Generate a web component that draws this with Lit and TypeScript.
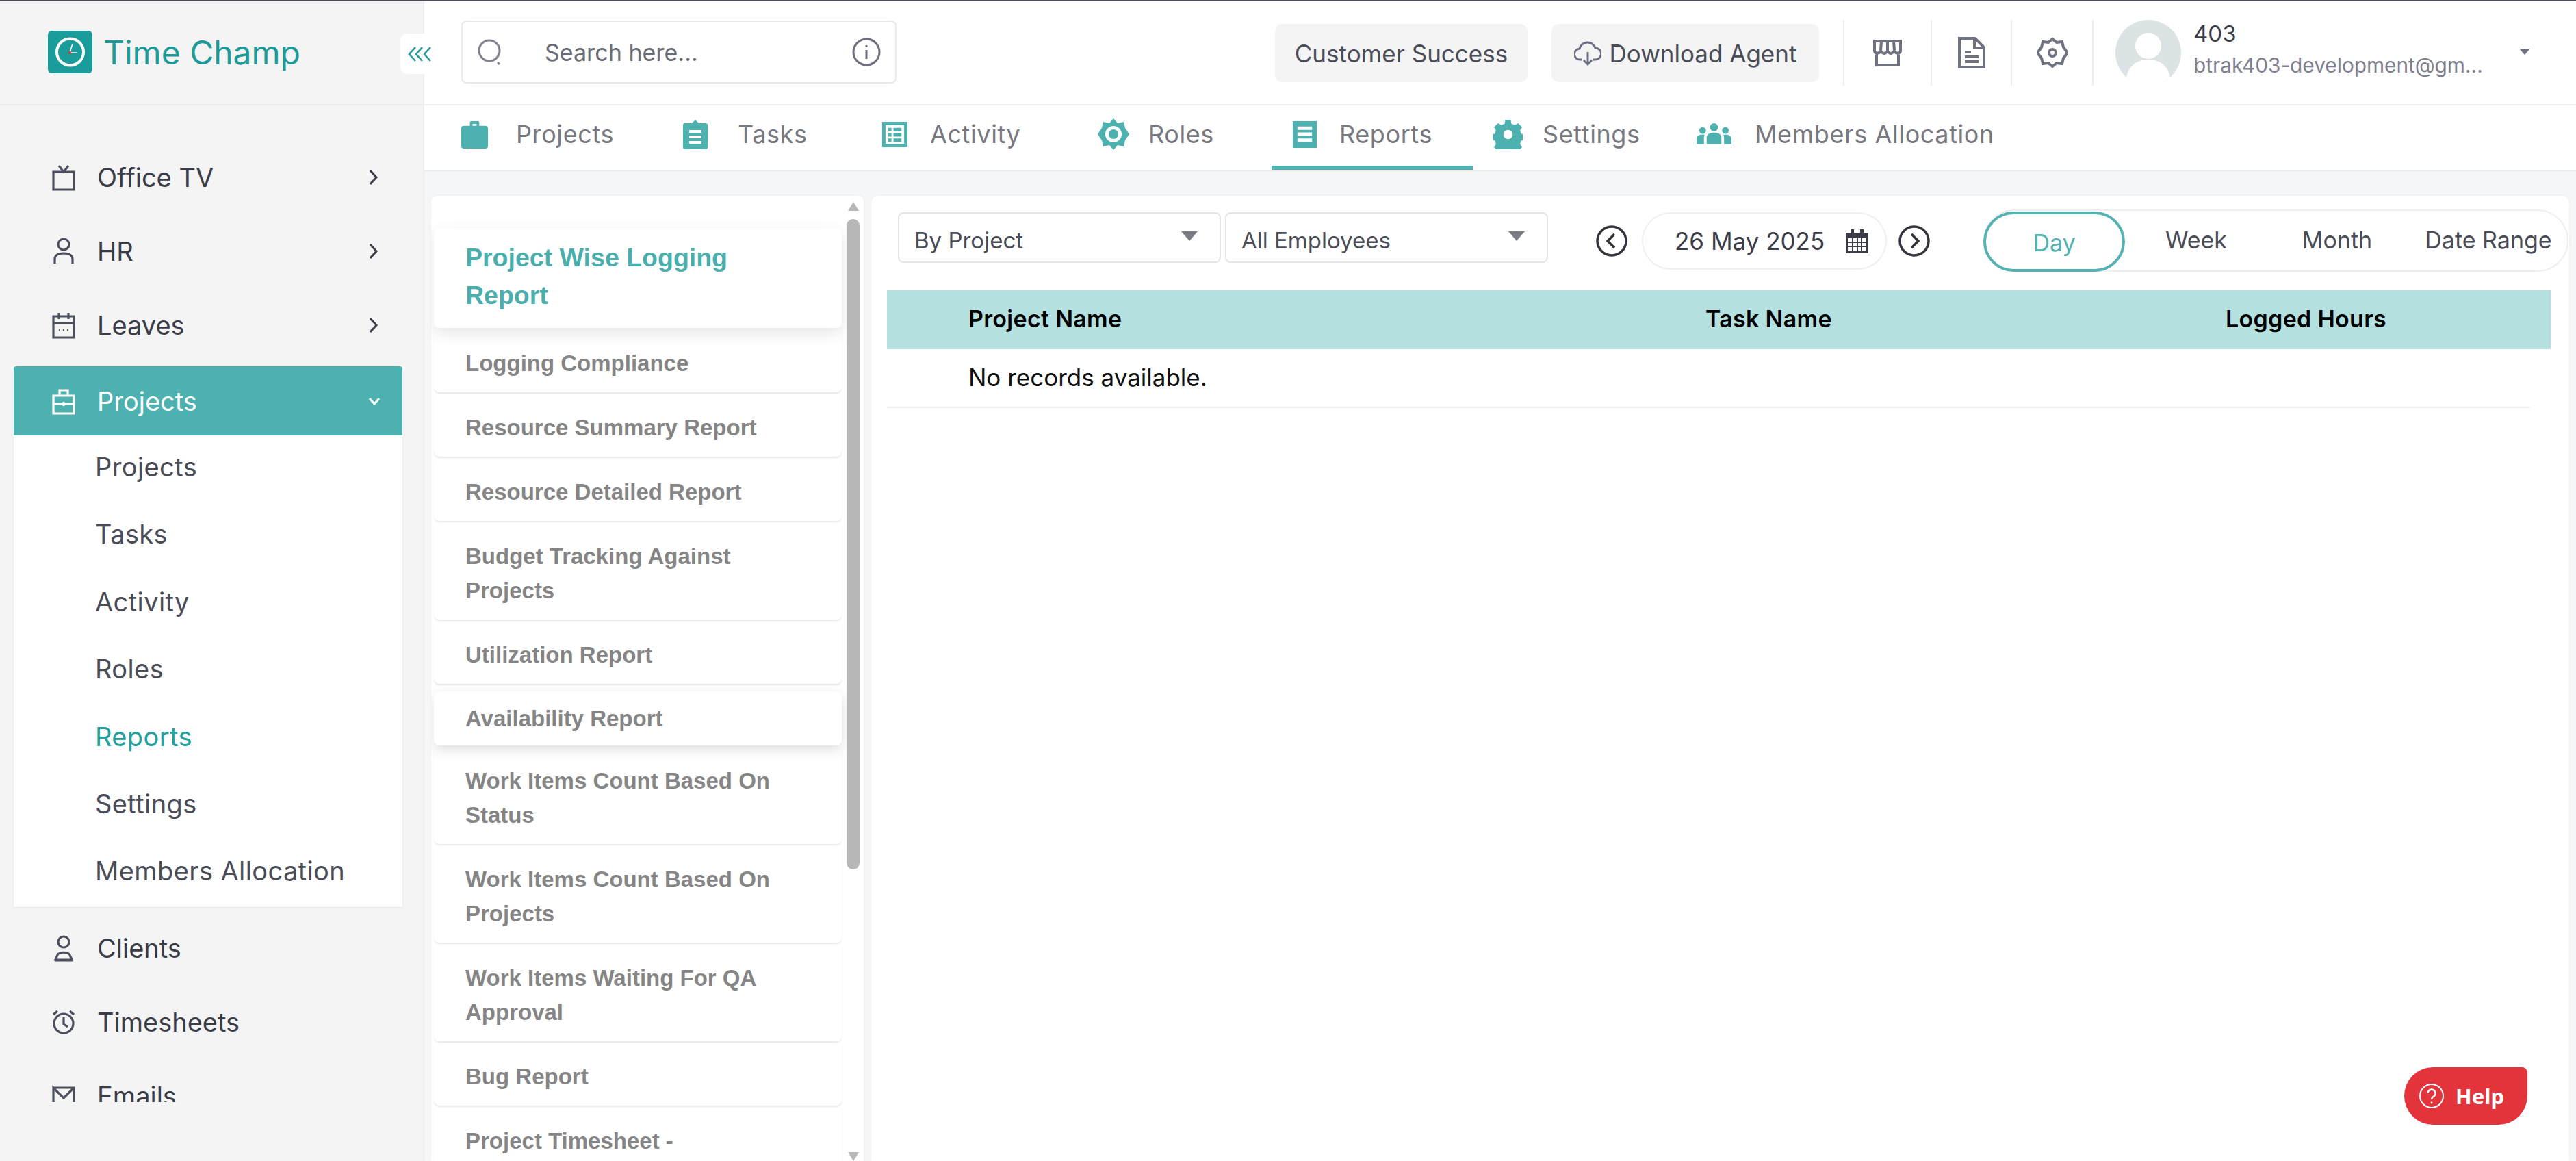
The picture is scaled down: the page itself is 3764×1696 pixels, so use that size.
import { LitElement, html, css } from 'lit';
import { customElement } from 'lit/decorators.js';

// sidebar line icons, all drawn on a 34x40 box
const sideIcons: Record<string, unknown> = {
  tv: html`<svg class="side-ico" viewBox="0 0 34 40"><path d="M2 12h30v26H2zM10 3l7 9 7-9" /></svg>`,
  hr: html`<svg class="side-ico" viewBox="0 0 34 40"><circle cx="17" cy="10" r="8" /><path d="M4 38v-6c0-6 5-9 13-9s13 3 13 9v6" /></svg>`,
  cal: html`<svg class="side-ico" viewBox="0 0 34 40"><path d="M2 7h30v31H2zM2 17h30M10 2v9M24 2v9M10 27h2M16 27h2M22 27h2" /></svg>`,
  bag: html`<svg class="side-ico" viewBox="0 0 34 40"><path d="M2 12h30v26H2zM11 12V4h12v8M2 24h30M17 21v6" /></svg>`,
  client: html`<svg class="side-ico" viewBox="0 0 34 40"><circle cx="17" cy="11" r="8" /><path d="M8 30c2-5 16-5 18 0l3 7H5zM4 38h26" /></svg>`,
  alarm: html`<svg class="side-ico" viewBox="0 0 34 40"><circle cx="17" cy="22" r="14" /><path d="M17 13v10l6 4M2 9l6-5M32 9l-6-5" /></svg>`,
  mail: html`<svg class="side-ico" viewBox="0 0 34 40"><path d="M2 8h30v24M2 32V8l15 15L32 8" /></svg>`,
};

const navTop = [
  { label: 'Office TV', icon: 'tv' },
  { label: 'HR', icon: 'hr' },
  { label: 'Leaves', icon: 'cal' },
];
const navSub = ['Projects', 'Tasks', 'Activity', 'Roles', 'Reports', 'Settings', 'Members Allocation'];
const navBottom = [
  { label: 'Clients', icon: 'client' },
  { label: 'Timesheets', icon: 'alarm' },
  { label: 'Emails', icon: 'mail' },
];

const tabIcons: Record<string, unknown> = {
  case: html`<svg viewBox="0 0 42 42"><path d="M14 8V3a2 2 0 0 1 2-2h10a2 2 0 0 1 2 2v5h9a4 4 0 0 1 4 4v26a4 4 0 0 1-4 4H5a4 4 0 0 1-4-4V12a4 4 0 0 1 4-4zm4 0h6V5h-6z" fill-rule="evenodd" /></svg>`,
  clip: html`<svg viewBox="0 0 38 44"><path d="M4 6h10l5-5 5 5h10a3 3 0 0 1 3 3v32a3 3 0 0 1-3 3H4a3 3 0 0 1-3-3V9a3 3 0 0 1 3-3zM10 16v4h18v-4zM10 24v4h18v-4zM10 32v4h18v-4z" fill-rule="evenodd" /></svg>`,
  table: html`<svg viewBox="0 0 38 38"><path d="M0 0h38v38H0zM5 5v28h28V5zM9 9h5v5H9zM17 9h12v5H17zM9 17h5v5H9zM17 17h12v5H17zM9 25h5v5H9zM17 25h12v5H17z" fill-rule="evenodd" /></svg>`,
  role: html`<svg viewBox="0 0 46 46"><path d="M23 0l6 7 9-2 2 9 6 9-6 9-2 9-9-2-6 7-6-7-9 2-2-9-6-9 6-9 2-9 9 2zM23 11a12 12 0 1 0 0 24 12 12 0 0 0 0-24zM23 16a7 7 0 1 1 0 14 7 7 0 0 1 0-14z" fill-rule="evenodd" /></svg>`,
  rep: html`<svg viewBox="0 0 38 42"><path d="M1 1h36v40H1zM8 9v5h22V9zM8 18v5h22v-5zM8 27v5h22v-5z" fill-rule="evenodd" /></svg>`,
  gear: html`<svg viewBox="0 0 44 44"><path d="M18 0h8l1 6 5 2 5-3 6 6-3 5 2 5 6 1v8l-6 1-2 5 3 5-6 6-5-3-5 2-1 6h-8l-1-6-5-2-5 3-6-6 3-5-2-5-6-1v-8l6-1 2-5-3-5 6-6 5 3 5-2zM22 15a7 7 0 1 0 0 14 7 7 0 0 0 0-14z" fill-rule="evenodd" /></svg>`,
  team: html`<svg viewBox="0 0 52 34"><circle cx="26" cy="7" r="6" /><circle cx="9" cy="12" r="5" /><circle cx="43" cy="12" r="5" /><path d="M15 32V23c0-6 5-8 11-8s11 2 11 8v9zM0 32v-8c0-4 4-6 8-6h4c-1 2-1 4-1 6v8zM52 32v-8c0-4-4-6-8-6h-4c1 2 1 4 1 6v8z" /></svg>`,
};

const tabs = [
  { label: 'Projects', icon: 'case', w: 324, iw: 41, tx: 81 },
  { label: 'Tasks', icon: 'clip', w: 292, iw: 38, tx: 81 },
  { label: 'Activity', icon: 'table', w: 315, iw: 37, tx: 70 },
  { label: 'Roles', icon: 'role', w: 284, iw: 46, tx: 74 },
  { label: 'Reports', icon: 'rep', w: 294, iw: 37, tx: 69, active: true },
  { label: 'Settings', icon: 'gear', w: 297, iw: 43, tx: 72 },
  { label: 'Members Allocation', icon: 'team', w: 480, iw: 51, tx: 85 },
];

const reports = [
  { t: 'Logging Compliance' },
  { t: 'Resource Summary Report' },
  { t: 'Resource Detailed Report' },
  { t: 'Budget Tracking Against Projects' },
  { t: 'Utilization Report' },
  { t: 'Availability Report', hover: true },
  { t: 'Work Items Count Based On Status' },
  { t: 'Work Items Count Based On Projects' },
  { t: 'Work Items Waiting For QA Approval' },
  { t: 'Bug Report' },
  { t: 'Project Timesheet -' },
];

@customElement('app-root')
export class AppRoot extends LitElement {
  static styles = css`
    :host {
      display: block;
      height: 1696px;
      overflow: hidden;
      font-family: Inter, 'Noto Sans', sans-serif;
      color: #3b3f4a;
    }
    .shell {
      display: flex;
      height: 1694px;
      border-top: 2px solid #4a4c55;
      position: relative;
      background: #fff;
    }

    /* sidebar */
    .sidebar {
      width: 618px;
      flex: none;
      background: #f4f4f4;
      border-right: 2px solid #eeeeee;
    }
    .brand {
      height: 150px;
      border-bottom: 2px solid #ececec;
      display: flex;
      align-items: center;
      padding-left: 70px;
      gap: 16px;
    }
    .brand svg {
      width: 65px;
      height: 62px;
      margin-top: -2px;
    }
    .brand span {
      font-size: 48px;
      color: #1b9a98;
      margin-top: -1px;
    }
    .collapse {
      position: absolute;
      left: 585px;
      top: 47px;
      width: 58px;
      height: 59px;
      background: #fff;
      border-radius: 10px;
      display: flex;
      align-items: center;
      justify-content: center;
    }
    .collapse svg {
      width: 36px;
      height: 22px;
      fill: none;
      stroke: #1b9a98;
      stroke-width: 2.500;
    }
    nav {
      height: 1405px;
      padding-top: 51px;
      overflow: hidden;
    }
    .nav-item {
      height: 108px;
      display: flex;
      align-items: center;
      padding-left: 76px;
      font-size: 38px;
      color: #3a3d48;
      position: relative;
    }
    .side-ico {
      width: 34px;
      height: 40px;
      margin-right: 32px;
      fill: none;
      stroke: #4b4e5c;
      stroke-width: 3.2;
      flex: none;
    }
    .chev {
      position: absolute;
      left: 536px;
      width: 18px;
      height: 30px;
      fill: none;
      stroke: #3a3d48;
      stroke-width: 3;
    }
    .nav-item.open {
      height: 101px;
      margin: 6px 0 0 20px;
      width: 568px;
      padding-left: 56px;
      box-sizing: border-box;
      background: #4db1af;
      border-radius: 4px 4px 0 0;
      color: #fff;
    }
    .nav-item.open .side-ico {
      stroke: #fff;
    }
    .nav-item.open .chev {
      left: 516px;
      stroke: #fff;
      width: 22px;
      height: 14px;
    }
    .sub {
      width: 568px;
      margin-left: 20px;
      margin-bottom: 6px;
      background: #fff;
      height: 689px;
      padding-left: 119px;
      box-sizing: border-box;
      box-shadow: 0 1px 2px rgba(0, 0, 0, 0.08);
    }
    .sub div {
      height: 98.4px;
      line-height: 92px;
      font-size: 38px;
      letter-spacing: 0.4px;
      color: #4a4d57;
    }
    .sub div.on {
      color: #22a19e;
    }

    /* top header */
    .main {
      flex: 1;
      min-width: 0;
      display: flex;
      flex-direction: column;
    }
    .header {
      height: 150px;
      flex: none;
      border-bottom: 2px solid #eef0f0;
      display: flex;
      padding-left: 54px;
    }
    .search {
      width: 636px;
      height: 92px;
      margin-top: 28px;
      box-sizing: border-box;
      border: 2px solid #e9e9ec;
      border-radius: 8px;
      display: flex;
      align-items: center;
      padding: 0 20px 0 22px;
      font-size: 34px;
      color: #6a6d76;
    }
    .search .lens {
      width: 38px;
      height: 44px;
      fill: none;
      stroke: #80838e;
      stroke-width: 3;
      margin-right: 60px;
    }
    .search span {
      flex: 1;
    }
    .search .info {
      width: 44px;
      height: 44px;
      fill: none;
      stroke: #6d7080;
      stroke-width: 3;
    }
    .actions {
      margin-left: 553px;
      display: flex;
      height: 96px;
      margin-top: 27px;
    }
    .btn {
      height: 85px;
      margin-top: 6px;
      background: #f4f4f4;
      border-radius: 10px;
      display: flex;
      align-items: center;
      justify-content: center;
      font-size: 35px;
      color: #4a4d57;
      box-sizing: border-box;
    }
    .btn.cs {
      width: 369px;
      margin-right: 35px;
    }
    .btn.dl {
      width: 391px;
      margin-right: 35px;
      gap: 12px;
    }
    .btn.dl svg {
      width: 40px;
      height: 40px;
      fill: none;
      stroke: #6d7080;
      stroke-width: 3;
    }
    .tool {
      box-sizing: border-box;
      border-left: 2px solid #ededee;
      display: flex;
      align-items: center;
      justify-content: center;
      flex: none;
    }
    .tool.store {
      width: 128px;
    }
    .tool.doc {
      width: 117px;
    }
    .tool.cog {
      width: 119px;
    }
    .tool svg {
      width: 46px;
      height: 46px;
      fill: none;
      stroke: #6e7180;
      stroke-width: 4;
    }
    .user {
      border-left: 2px solid #ededee;
      display: flex;
      align-items: flex-start;
      padding-left: 32px;
      width: 640px;
      box-sizing: border-box;
    }
    .avatar {
      width: 96px;
      height: 96px;
      flex: none;
    }
    .who {
      margin-left: 18px;
      width: 440px;
    }
    .who b {
      display: block;
      font-weight: 400;
      font-size: 33px;
      line-height: 40px;
      color: #3a3d48;
    }
    .who small {
      display: block;
      margin-top: 6px;
      font-size: 29.800px;
      line-height: 40px;
      color: #7e808e;
      white-space: nowrap;
    }
    .caret {
      width: 0;
      height: 0;
      border-left: 8px solid transparent;
      border-right: 8px solid transparent;
      border-top: 9px solid #6e7180;
      margin: 42px 0 0 38px;
    }

    /* tabs */
    .tabs {
      height: 94px;
      flex: none;
      display: flex;
      padding-left: 23px;
      border-bottom: 2px solid #e8eaea;
    }
    .tab {
      height: 94px;
      box-sizing: border-box;
      padding-left: 30px;
      display: flex;
      align-items: center;
      font-size: 36px;
      letter-spacing: 0.6px;
      color: #77797f;
      flex: none;
      padding-bottom: 10px;
    }
    .tab.on {
      border-bottom: 6px solid #4db1af;
      padding-bottom: 4px;
    }
    .tab .ic {
      flex: none;
      display: flex;
      align-items: center;
    }
    .tab svg {
      fill: #4db1af;
      display: block;
    }

    /* content */
    .content {
      flex: 1;
      min-height: 0;
      background: #f5f6f8;
      display: flex;
      padding: 36px 0 0 10px;
      position: relative;
    }
    .reports {
      width: 632px;
      flex: none;
      background: #fff;
      border-radius: 8px 8px 0 0;
      padding: 47px 0 0 4px;
      box-sizing: border-box;
      position: relative;
      overflow: hidden;
      font-family: 'Liberation Sans', Arial, sans-serif;
      font-weight: 700;
      box-shadow: 0 0 3px rgba(0, 0, 0, 0.06);
    }
    .rep {
      width: 596px;
      padding: 27px 60px 17px 46px;
      box-sizing: border-box;
      font-size: 33px;
      line-height: 50px;
      color: #858585;
      border-radius: 8px;
      box-shadow: 0 2px 2px rgba(0, 0, 0, 0.09);
    }
    .rep.sel {
      color: #4aaead;
      font-size: 37.500px;
      line-height: 55px;
      padding: 16px 100px 20px 46px;
      box-shadow: 0 8px 22px rgba(0, 0, 0, 0.1);
      position: relative;
    }
    .rep.hov {
      padding: 15px 60px 14px 46px;
      margin: 11px 0 0;
      box-shadow: 0 6px 18px rgba(0, 0, 0, 0.13);
      position: relative;
    }
    .thumb {
      position: absolute;
      left: 607px;
      top: 34px;
      width: 19px;
      height: 950px;
      border-radius: 10px;
      background: #b7b7b7;
    }
    .arrow {
      position: absolute;
      left: 609px;
      width: 0;
      height: 0;
      border-left: 8px solid transparent;
      border-right: 8px solid transparent;
      border-bottom: 13px solid #b7b7b7;
    }
    .arrow.up {
      top: 9px;
    }
    .arrow.down {
      bottom: 0;
      transform: rotate(180deg);
    }
    .panel {
      width: 2481px;
      margin-left: 11px;
      flex: none;
      background: #fff;
      border-radius: 10px 10px 0 0;
      box-shadow: 0 0 3px rgba(0, 0, 0, 0.06);
    }
    .toolbar {
      height: 138px;
      box-sizing: border-box;
      display: flex;
      align-items: flex-start;
      padding: 20px 0 0 39px;
    }
    .select {
      width: 472px;
      height: 74px;
      margin-top: 4px;
      margin-right: 6px;
      box-sizing: border-box;
      border: 2px solid #e5e5e8;
      border-radius: 8px;
      font-size: 33px;
      padding: 8px 0 0 22px;
      display: flex;
      align-items: center;
      color: #4a4d57;
      position: relative;
    }
    .select i {
      position: absolute;
      right: 32px;
      top: 26px;
      border-left: 12px solid transparent;
      border-right: 12px solid transparent;
      border-top: 14px solid #7b7d85;
    }
    .round {
      width: 48px;
      height: 48px;
      flex: none;
      margin-top: 22px;
      fill: none;
      stroke: #33353d;
      stroke-width: 3.5;
    }
    .round.prev {
      margin-left: 63px;
      margin-right: 20px;
    }
    .round.next {
      margin-left: 16px;
    }
    .date {
      width: 358px;
      height: 84px;
      margin-top: 4px;
      box-sizing: border-box;
      border: 2px solid #efeff1;
      border-radius: 42px;
      display: flex;
      align-items: center;
      padding-left: 46px;
      font-size: 35px;
      color: #3a3d48;
      gap: 31px;
      white-space: nowrap;
    }
    .date svg {
      width: 33px;
      height: 36px;
      flex: none;
    }
    .seg {
      margin-left: 77px;
      width: 855px;
      height: 91px;
      box-sizing: border-box;
      border: 2px solid #eef0f0;
      border-radius: 46px;
      display: flex;
      font-size: 34px;
      color: #4a4d57;
    }
    .seg div {
      flex: none;
      display: flex;
      align-items: center;
      justify-content: center;
      height: 84px;
    }
    .seg .day {
      width: 207px;
      height: 88px;
      margin: 1px 0 0 -2px;
      box-sizing: border-box;
      border: 4px solid #54b3b2;
      border-radius: 44px;
      color: #54b3b2;
      padding-top: 2px;
    }
    .seg .wk {
      width: 208px;
    }
    .seg .mo {
      width: 204px;
    }
    .seg .dr {
      width: 238px;
      white-space: nowrap;
    }
    .thead,
    .trow {
      display: grid;
      grid-template-columns: 1077px 760px 1fr;
      padding-left: 119px;
      align-items: center;
      margin-left: 23px;
      box-sizing: border-box;
    }
    .thead {
      width: 2431px;
      height: 86px;
      padding-bottom: 3px;
      background: #b4e1e0;
      font-size: 34px;
      letter-spacing: 0.3px;
      font-weight: 600;
      color: #000;
      white-space: nowrap;
    }
    .trow {
      width: 2401px;
      height: 86px;
      padding-bottom: 3px;
      border-bottom: 2px solid #efefef;
      font-size: 35px;
      color: #111;
      white-space: nowrap;
    }
    .help {
      position: absolute;
      right: 71px;
      bottom: 53px;
      width: 180px;
      height: 84px;
      background: #e3343c;
      border-radius: 42px 8px 42px 42px;
      display: flex;
      align-items: center;
      padding-left: 21px;
      box-sizing: border-box;
      gap: 16px;
      color: #fff;
      font-family: 'Noto Sans', sans-serif;
      font-weight: 700;
      font-size: 31px;
    }
    .help svg {
      width: 38px;
      height: 38px;
      fill: none;
      stroke: #fff;
      stroke-width: 2;
    }
  `;

  private chevron() {
    return html`<svg class="chev" viewBox="0 0 18 30"><path d="M5 5l9 10-9 10" /></svg>`;
  }

  private renderSidebar() {
    return html`
      <aside class="sidebar">
        <div class="brand">
          <svg viewBox="0 0 65 62">
            <rect width="65" height="62" rx="6" fill="#1a9c9a" />
            <circle cx="32.500" cy="31" r="19.500" fill="none" stroke="#fff" stroke-width="4" />
            <path d="M32 32l4-13M32 32h11" stroke="#fff" stroke-width="1.600" fill="none" />
            <circle cx="32" cy="32" r="2" fill="#e3343c" />
          </svg>
          <span>Time Champ</span>
        </div>
        <nav>
          ${navTop.map(
            n => html`<div class="nav-item">${sideIcons[n.icon]}${n.label}${this.chevron()}</div>`
          )}
          <div class="nav-item open">
            ${sideIcons.bag}Projects
            <svg class="chev" viewBox="0 0 22 14"><path d="M4 3l7 8 7-8" /></svg>
          </div>
          <div class="sub">
            ${navSub.map(s => html`<div class=${s === 'Reports' ? 'on' : ''}>${s}</div>`)}
          </div>
          ${navBottom.map(n => html`<div class="nav-item">${sideIcons[n.icon]}${n.label}</div>`)}
        </nav>
      </aside>
      <div class="collapse">
        <svg viewBox="0 0 36 22"><path d="M11 1L2 11l9 10M21 1l-9 10 9 10M33 1l-9 10 9 10" /></svg>
      </div>
    `;
  }

  private renderHeader() {
    return html`
      <header class="header">
        <div class="search">
          <svg class="lens" viewBox="0 0 38 44"><circle cx="17" cy="20" r="15" /><path d="M29 37l3 3" /></svg>
          <span>Search here...</span>
          <svg class="info" viewBox="0 0 44 44">
            <circle cx="22" cy="22" r="19" />
            <path d="M22 19v13M22 12v3" />
          </svg>
        </div>
        <div class="actions">
          <div class="btn cs">Customer Success</div>
          <div class="btn dl">
            <svg viewBox="0 0 40 40">
              <path d="M12 29H9a8 8 0 0 1-1-16 12 12 0 0 1 23-1 8.500 8.500 0 0 1 0 17h-3M20 18v17M14 30l6 6 6-6" />
            </svg>
            Download Agent
          </div>
          <div class="tool store">
            <svg viewBox="0 0 46 46"><path d="M4 20V6h38v14M4 20c0 4 6 5 9.500 1 3.500 4 6 4 9.500 0 3.500 4 6 4 9.500 0 3.500 4 9.500 3 9.500-1M7 24v17h32V24M4 6h38M14 6l-1 14M23 6v14M32 6l1 14" /></svg>
          </div>
          <div class="tool doc">
            <svg viewBox="0 0 46 46"><path d="M5 2h23l13 13v29H5zM27 2v14h14M13 22h9M13 29h20M13 36h20" /></svg>
          </div>
          <div class="tool cog">
            <svg viewBox="0 0 46 46"><path d="M23 3l6 5 8-1 2 8 6 8-6 8-2 8-8-1-6 5-6-5-8 1-2-8-6-8 6-8 2-8 8 1z" /><circle cx="23" cy="23" r="5" /></svg>
          </div>
          <div class="user">
            <svg class="avatar" viewBox="0 0 96 96">
              <circle cx="48" cy="48" r="48" fill="#dbe3e5" />
              <circle cx="48" cy="38" r="19" fill="#fff" />
              <path d="M16 84c3-18 17-26 32-26s29 8 32 26a48 48 0 0 1-64 0z" fill="#fff" />
            </svg>
            <div class="who">
              <b>403</b>
              <small>btrak403-development@gm...</small>
            </div>
            <span class="caret"></span>
          </div>
        </div>
      </header>
      <div class="tabs">
        ${tabs.map(
          t => html`
            <div class="tab ${t.active ? 'on' : ''}" style="width:${t.w}px">
              <span class="ic" style="width:${t.tx}px">
                <span style="width:${t.iw}px">${tabIcons[t.icon]}</span>
              </span>
              ${t.label}
            </div>
          `
        )}
      </div>
    `;
  }

  render() {
    return html`
      <div class="shell">
        ${this.renderSidebar()}
        <div class="main">
          ${this.renderHeader()}
          <div class="content">
            <section class="reports">
              <div class="rep sel">Project Wise Logging Report</div>
              ${reports.map(r => html`<div class="rep ${r.hover ? 'hov' : ''}">${r.t}</div>`)}
              <span class="arrow up"></span>
              <span class="thumb"></span>
              <span class="arrow down"></span>
            </section>
            <section class="panel">
              <div class="toolbar">
                <div class="select">By Project<i></i></div>
                <div class="select">All Employees<i></i></div>
                <svg class="round prev" viewBox="0 0 48 48"><circle cx="24" cy="24" r="21" /><path d="M28 14L18 24l10 10" /></svg>
                <div class="date">
                  26 May 2025
                  <svg viewBox="0 0 33 36">
                    <path d="M0 6h33v30H0z" fill="#3a3d48" />
                    <path d="M3 14h27v19H3z" fill="#fff" />
                    <path d="M3 20h27M3 26h27M10 14v19M17 14v19M23 14v19" stroke="#3a3d48" stroke-width="2" fill="none" />
                    <path d="M7 1h5v8H7zM21 1h5v8h-5z" fill="#3a3d48" />
                  </svg>
                </div>
                <svg class="round next" viewBox="0 0 48 48"><circle cx="24" cy="24" r="21" /><path d="M20 14l10 10-10 10" /></svg>
                <div class="seg">
                  <div class="day">Day</div>
                  <div class="wk">Week</div>
                  <div class="mo">Month</div>
                  <div class="dr">Date Range</div>
                </div>
              </div>
              <div class="thead">
                <span>Project Name</span><span>Task Name</span><span>Logged Hours</span>
              </div>
              <div class="trow"><span>No records available.</span></div>
            </section>
            <div class="help">
              <svg viewBox="0 0 38 38">
                <circle cx="19" cy="19" r="17" />
                <path d="M13.500 15a5.500 5.500 0 1 1 8 5c-1.500 1-2.500 2-2.500 4" stroke-width="2.600" />
                <circle cx="19" cy="29" r="1.400" fill="#fff" stroke="none" />
              </svg>
              Help
            </div>
          </div>
        </div>
      </div>
    `;
  }
}
